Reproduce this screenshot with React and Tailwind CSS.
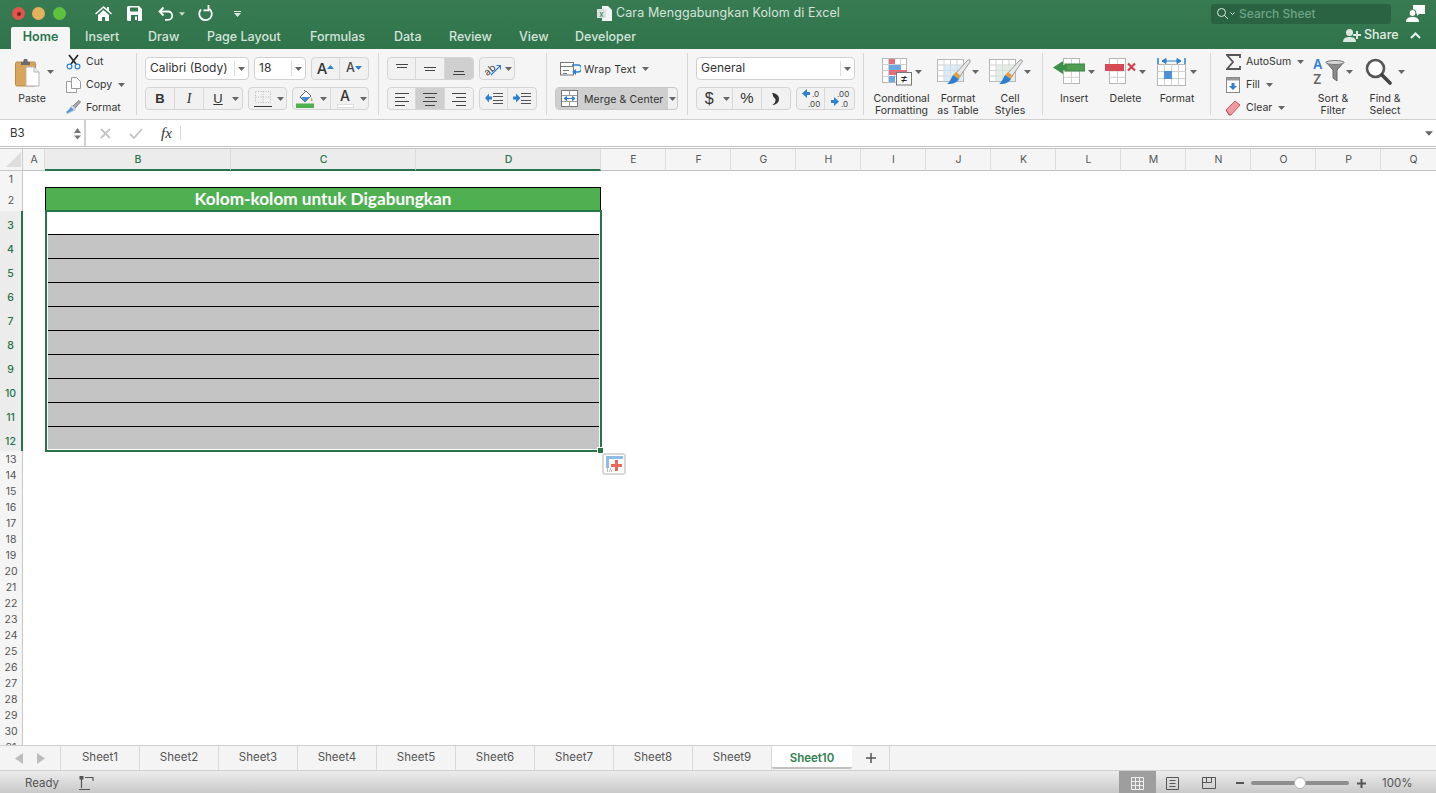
import React from "react";

const Caret = ({ c = "#666", w = 7, h = 4, className = "" }) => (
  <svg width={w} height={h} viewBox="0 0 7 4" className={"shrink-0 " + className}><path d="M0 0h7L3.5 4z" fill={c} /></svg>
);

const Sep = () => <div className="w-px shrink-0 h-[62px] mt-[4px] bg-[#d6d6d6]" />;

const Group = ({ w, children, className = "" }) => (
  <div className={"flex h-[23px] shrink-0 overflow-hidden rounded-[4px] border border-[#d4d4d4] bg-[#f1f1f1] " + className} style={{ width: w }}>
    {children}
  </div>
);

const Cell = ({ w, on, last, children }) => (
  <div className={"flex h-full items-center justify-center " + (last ? "" : "border-r border-[#d8d8d8] ") + (on ? "bg-[#cfcfcf]" : "")} style={{ width: w }}>
    {children}
  </div>
);

const Lines = ({ ys, xs }) => (
  <svg width="16" height="16" viewBox="0 0 16 16">
    {ys.map((y, i) => <path key={i} d={`M${xs[i][0]} ${y + 0.5}H${xs[i][1]}`} stroke="#444" strokeWidth="1" />)}
  </svg>
);

const Select = ({ w, label, sep = 18 }) => (
  <div className="flex h-[23px] shrink-0 items-center rounded-[4px] border border-[#d0d0d0] bg-white pl-[4px] text-[12px] text-[#333]" style={{ width: w }}>
    <span className="flex-1 whitespace-nowrap pb-[2px]">{label}</span>
    <div className="flex h-[15px] items-center justify-center border-l border-[#dcdcdc]" style={{ width: sep - 4 }}><Caret /></div>
  </div>
);

const Big = ({ w, icon, caret = true, gap = 3, lines }) => (
  <div className="flex h-full shrink-0 flex-col items-center" style={{ width: w }}>
    <div className="flex h-[44px] shrink-0 items-center justify-center pt-px" style={{ gap }}>
      {icon}
      {caret && <Caret />}
    </div>
    {lines.map((l) => (
      <div key={l} className="whitespace-nowrap text-center text-[10.5px] leading-[12px] text-[#333]">{l}</div>
    ))}
  </div>
);

const Small = ({ icon, label, caret, tw = 20 }) => (
  <div className="flex h-[23px] items-center">
    <div className="flex items-center justify-center" style={{ width: tw }}>{icon}</div>
    <span className="ml-[5px] whitespace-nowrap text-[10.5px] text-[#333]">{label}</span>
    {caret && <Caret className="ml-[6px]" />}
  </div>
);

/* ---------- ribbon drawings ---------- */
const PasteIcon = () => (
  <svg width="25" height="29" viewBox="0 0 25 29">
    <rect x="0.5" y="4" width="20" height="24" rx="1.5" fill="#d9a45c" stroke="#b98b49" />
    <path d="M6 4h2l1-3h3l1 3h2v3H6z" fill="#6b6b6b" />
    <path d="M11 9h8l5 5v14H11z" fill="#fff" stroke="#b5b5b5" />
    <path d="M19 9v5h5" fill="#eee" stroke="#b5b5b5" />
  </svg>
);
const CutIcon = () => (
  <svg width="15" height="16" viewBox="0 0 15 16" fill="none">
    <path d="M3 1l7 9M12 1L5 10" stroke="#222" strokeWidth="1.6" />
    <circle cx="3.5" cy="12.5" r="2.4" stroke="#2f7fd0" strokeWidth="1.2" />
    <circle cx="11.5" cy="12.5" r="2.4" stroke="#2f7fd0" strokeWidth="1.2" />
  </svg>
);
const CopyIcon = () => (
  <svg width="15" height="16" viewBox="0 0 15 16" fill="#fff" stroke="#9a9a9a">
    <path d="M5.5 .5h5l4 4v7h-9z" />
    <path d="M.5 4.5h5v7h5v4h-10z" />
  </svg>
);
const BrushIcon = () => (
  <svg width="16" height="15" viewBox="0 0 16 15">
    <path d="M8 6l6-5.500 1.500 1.500L10 8z" fill="#b0b0b0" stroke="#555" strokeWidth=".7" />
    <path d="M7 5l4 4-2 2-1-1-1 2-1-1-1 2-1-1-1 2-2-2c2-1 3-3 4-4z" fill="#5b97dc" />
    <path d="M7 5l4 4-1.500 1.500-4-4z" fill="#d9dde3" />
  </svg>
);
const Borders = () => (
  <svg width="18" height="18" viewBox="0 0 18 18">
    <path d="M1.500 1.500h15v11h-15zM9 1.500v11M1.500 7h15" fill="none" stroke="#bbb" strokeDasharray="1 1.500" />
    <path d="M0 16.500h18" stroke="#333" />
  </svg>
);
const Bucket = () => (
  <svg width="18" height="19" viewBox="0 0 18 19">
    <path d="M4 8l6-6 5 5-6 6z" fill="#fff" stroke="#666" />
    <path d="M8 1l2 2" stroke="#666" />
    <path d="M5 8h9l-5 5z" fill="#3f8fdc" />
    <path d="M15 8c1 1.500 2 2.500 1.500 4h-1.500z" fill="#e2a043" />
    <rect x="0" y="14.500" width="18" height="4.500" fill="#4fae4e" />
  </svg>
);
const FontColor = () => (
  <div className="flex flex-col items-center">
    <span className="text-[14px] font-medium leading-[14px] text-[#333]">A</span>
    <span className="mt-[1px] h-[4px] w-[17px] border border-[#ddd] bg-white" />
  </div>
);
const Orient = () => (
  <svg width="18" height="16" viewBox="0 0 18 16" className="overflow-visible">
    <text x="0" y="12" fontSize="10" fill="#444" fontFamily="Inter, sans-serif" transform="rotate(-40 6 9)">ab</text>
    <path d="M7 14L16 5M12.500 4.500H16.500V8.500" fill="none" stroke="#2f7fd0" strokeWidth="1.100" />
  </svg>
);
const Indent = ({ flip }) => (
  <svg width="18" height="13" viewBox="0 0 18 13">
    <path d="M8 1.500h10M8 4.500h10M8 8.500h10M8 11.500h10" stroke="#555" />
    {flip ? <path d="M0 4.500h3V1.500L7.500 6 3 10.500v-3H0z" fill="#2f7fd0" /> : <path d="M7 4.500H4V1.500L0 6l4 4.500v-3h3z" fill="#2f7fd0" />}
  </svg>
);
const WrapIcon = () => (
  <svg width="21" height="14" viewBox="0 0 21 14">
    <rect x=".5" y=".5" width="13" height="12.500" fill="#fff" stroke="#777" />
    <path d="M.5 4.500h13M3 8.500h6M3 11.500h4" stroke="#777" />
    <path d="M12 3h6a2.500 2.500 0 010 7h-3" fill="none" stroke="#2f7fd0" strokeWidth="1.600" />
    <path d="M16 7l-4 3 4 3z" fill="#2f7fd0" />
  </svg>
);
const MergeIcon = () => (
  <svg width="20" height="17" viewBox="0 0 20 17">
    <rect x=".5" y=".5" width="16" height="16" fill="#fff" stroke="#777" />
    <path d="M.5 5.500h16M.5 11.500h16M8.500 .5v5M8.500 11.500v5" stroke="#999" />
    <path d="M3 8.500h11M3 8.500l2.500-2v4zM14 8.500l-2.500-2v4z" fill="#2f7fd0" stroke="#2f7fd0" />
  </svg>
);
const Dec = ({ up }) => (
  <svg width="22" height="20" viewBox="0 0 22 20" fontFamily="Inter, sans-serif" fontSize="8" fill="#444">
    {up ? (
      <>
        <text x="8" y="8">.00</text><text x="12" y="18">.0</text>
        <path d="M1 11h3V8l5 4.500-5 4.500v-3H1z" fill="#2f7fd0" transform="translate(1 0)" />
      </>
    ) : (
      <>
        <text x="12" y="8">.0</text><text x="8" y="18">.00</text>
        <path d="M10 3H7V0L2 4.500 7 9V6h3z" fill="#2f7fd0" />
      </>
    )}
  </svg>
);
const Comma = () => (
  <svg width="7" height="12" viewBox="0 0 7 12"><path d="M0 0c4 0 7 2.500 7 6s-3 6-6.500 6c2-1.500 3-3 3-5C3.500 5 2 5 1.500 4 1 3 1 1.500 0 0z" fill="#333" /></svg>
);
const GridBase = ({ x = 0, y = 0, w = 26, h = 22, cols = 4, rows = 4, s = "#b5b5b5" }) => (
  <g transform={`translate(${x} ${y})`}>
    <rect x=".5" y=".5" width={w} height={h} fill="#fff" stroke={s} />
    {Array.from({ length: cols - 1 }, (_, i) => <path key={i} d={`M${((i + 1) * w) / cols + 0.5} .5v${h}`} stroke="#d0d0d0" />)}
    {Array.from({ length: rows - 1 }, (_, i) => <path key={i} d={`M.5 ${((i + 1) * h) / rows + 0.5}h${w}`} stroke="#d0d0d0" />)}
  </g>
);
const CondIcon = () => (
  <svg width="30" height="28" viewBox="0 0 30 28">
    <GridBase w={24} h={24} />
    <rect x="7" y="1" width="6" height="5" fill="#e0707a" />
    <rect x="7" y="7" width="12" height="5" fill="#6ea8e0" />
    <rect x="7" y="12" width="18" height="5" fill="#e0707a" />
    <rect x="7" y="18" width="6" height="6" fill="#6ea8e0" />
    <rect x="14.500" y="14.500" width="15" height="12.500" fill="#fff" stroke="#777" />
    <text x="22" y="25" fontSize="12" textAnchor="middle" fill="#222" fontFamily="Inter, sans-serif">≠</text>
  </svg>
);
const BrushBig = ({ x = 8 }) => (
  <g transform={`translate(${x} 0)`}>
    <path d="M9 15L21 2c1-1 3 0 2 2L13 18z" fill="#e8e8e8" stroke="#9a9a9a" />
    <path d="M9 14l5 4-2 3-6-4z" fill="#e2a043" />
    <path d="M6 17l6 4c-3 5-8 5-12 5 3-2 4-6 6-9z" fill="#2f7fd0" />
  </g>
);
const TableIcon = ({ tint = "#cfe3f3" }) => (
  <svg width="34" height="28" viewBox="0 0 34 28">
    <GridBase w={26} h={22} x={0} y={1} />
    <rect x="7" y="7" width="19" height="16" fill={tint} opacity=".7" />
    <BrushBig x={10} />
  </svg>
);
const InsertIcon = () => (
  <svg width="32" height="27" viewBox="0 0 32 27">
    <GridBase x={10} y={0} w={16} h={25} cols={2} rows={4} />
    <rect x="12" y="6" width="20" height="7" fill="#4f9e54" stroke="#3c8344" />
    <path d="M10 3v13L0 9.500z" fill="#3c8f46" />
    <path d="M10 7h4v5h-4z" fill="#3c8f46" />
  </svg>
);
const DeleteIcon = () => (
  <svg width="31" height="27" viewBox="0 0 31 27">
    <GridBase x={4} y={0} w={16} h={25} cols={2} rows={4} />
    <rect x="0" y="6" width="19" height="7" fill="#d64a53" />
    <path d="M23 5.500l7 7M30 5.500l-7 7" stroke="#d13f49" strokeWidth="2.200" />
  </svg>
);
const FormatIcon = () => (
  <svg width="30" height="28" viewBox="0 0 30 28">
    <path d="M1 0v6M28 0v6" stroke="#2f7fd0" strokeWidth="1.500" />
    <path d="M5 3h19M5 3l4-2.500v5zM24 3l-4-2.500v5z" stroke="#2f7fd0" fill="#2f7fd0" />
    <GridBase y={6} w={28} h={21} cols={4} rows={3} />
    <rect x="7" y="13" width="8" height="8" fill="#4f8fd8" />
  </svg>
);
const Sigma = () => (
  <svg width="15" height="16" viewBox="0 0 15 16"><path d="M14 4V1H1l6 7-6 7h13v-3" fill="none" stroke="#555" strokeWidth="1.800" /></svg>
);
const FillIcon = () => (
  <svg width="14" height="16" viewBox="0 0 14 16">
    <rect x=".5" y=".5" width="13" height="15" fill="#fff" stroke="#888" />
    <rect x="1" y="1" width="12" height="2.500" fill="#999" />
    <path d="M5.500 6h3v3h2.500L7 13 3 9h2.500z" fill="#2f7fd0" />
  </svg>
);
const Eraser = () => (
  <svg width="16" height="16" viewBox="0 0 16 16">
    <path d="M1 10l9-9 5 4-9 10H4z" fill="#ee9ca2" stroke="#c95560" />
    <path d="M1 10l4 5" stroke="#c95560" />
  </svg>
);
const SortIcon = () => (
  <svg width="31" height="27" viewBox="0 0 31 27" className="overflow-visible" fontFamily="Inter, sans-serif" fontWeight="600">
    <text x="0" y="11" fontSize="13" fill="#2f7fd0">A</text>
    <text x="0" y="26" fontSize="13" fill="#666">Z</text>
    <path d="M13 4h18l-7 8v11l-4-3v-8z" fill="#8a8a8a" stroke="#666" />
    <ellipse cx="22" cy="4.500" rx="9" ry="2" fill="#d8d8d8" stroke="#777" />
  </svg>
);
const Magnifier = () => (
  <svg width="27" height="27" viewBox="0 0 27 27" fill="none">
    <circle cx="10.500" cy="10.500" r="8.500" fill="#fff" stroke="#555" strokeWidth="2.600" />
    <path d="M17 17l8 8" stroke="#444" strokeWidth="3.600" strokeLinecap="round" />
  </svg>
);

/* ---------- title bar drawings ---------- */
const HomeI = () => (
  <svg width="17" height="15" viewBox="0 0 17 15" fill="#fff">
    <path d="M8.500 0L0 7.500 1 8.600 8.500 2 16 8.600l1-1.100-3-2.700V1h-2v2z" />
    <path d="M3 9l5.500-5L14 9v6h-4v-4H7v4H3z" />
  </svg>
);
const SaveI = () => (
  <svg width="15" height="15" viewBox="0 0 15 15">
    <path d="M0 1.500A1.500 1.500 0 011.500 0H12l3 3v10.500a1.500 1.500 0 01-1.500 1.500h-12A1.500 1.500 0 010 13.500z" fill="#fff" />
    <rect x="3" y="1.500" width="8" height="4" fill="#33784f" />
    <rect x="4" y="9" width="7" height="6" fill="#33784f" />
    <rect x="8" y="10.500" width="2" height="3.500" fill="#fff" />
  </svg>
);
const UndoI = () => (
  <svg width="16" height="15" viewBox="0 0 16 15" fill="none" stroke="#fff" strokeWidth="1.800">
    <path d="M5.500 1.500L1.500 5.500l4 4M1.500 5.500H10a4.200 4.200 0 010 8.400H7" />
  </svg>
);
const RedoI = () => (
  <svg width="16" height="17" viewBox="0 0 16 17" fill="none" stroke="#fff" strokeWidth="1.800">
    <path d="M4 4.500a6.300 6.300 0 108.500-.5" />
    <path d="M11.500 0v5.500H6.500" transform="translate(0 -.2)" />
  </svg>
);
const FileI = () => (
  <svg width="15" height="15" viewBox="0 0 15 15">
    <path d="M5 0h6l4 4v11H5z" fill="#f4f4f4" />
    <rect x="0" y="3" width="9" height="9" fill="#d7e4dc" />
    <text x="4.500" y="10.500" textAnchor="middle" fontSize="8" fill="#2f7a4f" fontFamily="Inter, sans-serif">x</text>
  </svg>
);
const UserI = () => (
  <svg width="19" height="19" viewBox="0 0 19 19" fill="#fff">
    <path d="M7 1h12v9h-6l-2 2v-2H7z" />
    <circle cx="6.500" cy="9" r="3.500" stroke="#33784f" />
    <path d="M0 18c0-4 3-5 6.500-5s6.500 1 6.500 5z" />
  </svg>
);
const ShareI = () => (
  <svg width="18" height="13" viewBox="0 0 18 13" fill="#dbe8e0">
    <circle cx="6.500" cy="3.500" r="3.500" />
    <path d="M0 13c0-4 3-5 6.500-5s6.500 1 6.500 5z" />
    <path d="M13 2h2v3h3v2h-3v3h-2V7h-3V5h3z" />
  </svg>
);

const tabs = [
  ["Insert", 36], ["Draw", 32], ["Page Layout", 76], ["Formulas", 57], ["Data", 28], ["Review", 43], ["View", 29], ["Developer", 63],
];

const cols = [
  ["A", 22, 0], ["B", 186, 1], ["C", 185, 1], ["D", 185, 1],
  ...["E", "F", "G", "H", "I", "J", "K", "L", "M", "N", "O", "P", "Q"].map((c) => [c, 65, 0]),
];

const rowH = (n) => (n >= 2 && n <= 12 ? 24 : 16);
const rows = Array.from({ length: 31 }, (_, i) => i + 1);
const sheets = ["Sheet1", "Sheet2", "Sheet3", "Sheet4", "Sheet5", "Sheet6", "Sheet7", "Sheet8", "Sheet9"];

export default function App() {
  return (
    <div className="flex h-[793px] w-[1436px] flex-col overflow-hidden bg-white font-['Inter','Liberation_Sans',sans-serif]">
      {/* title bar */}
      <div className="h-[49px] shrink-0 bg-gradient-to-b from-[#387b53] to-[#30744c]">
        <div className="flex h-[27px] items-center">
          <div className="flex w-[597px] shrink-0 items-center">
            <div className="ml-[12px] flex h-[13px] w-[13px] items-center justify-center rounded-full bg-[#e0564e]"><span className="h-[4px] w-[4px] rounded-full bg-[#7c2019]" /></div>
            <div className="ml-[7px] h-[13px] w-[13px] rounded-full bg-[#e6b15f]" />
            <div className="ml-[8px] h-[13px] w-[13px] rounded-full bg-[#5ec23f]" />
            <div className="ml-[29px]"><HomeI /></div>
            <div className="ml-[15px]"><SaveI /></div>
            <div className="ml-[16px]"><UndoI /></div>
            <Caret c="#c9dbd0" className="ml-[5px]" w={6} />
            <div className="ml-[12px]"><RedoI /></div>
            <div className="ml-[21px] flex flex-col items-center gap-[1px]">
              <span className="h-px w-[7px] bg-[#d8e6dd]" />
              <Caret c="#d8e6dd" />
            </div>
          </div>
          <FileI />
          <span className="ml-[4px] w-[595px] shrink-0 whitespace-nowrap text-[12.500px] tracking-[0.1px] text-[#d5e4da]">Cara Menggabungkan Kolom di Excel</span>
          <div className="flex h-[20px] w-[180px] shrink-0 items-center rounded-[3px] bg-[#2a6342] pl-[6px]">
            <svg width="11" height="11" viewBox="0 0 11 11" fill="none" stroke="#dfe9e3"><circle cx="4.500" cy="4.500" r="4" /><path d="M7.500 7.500L11 11" /></svg>
            <svg width="5" height="3" viewBox="0 0 5 3" className="ml-[2px]" fill="none" stroke="#dfe9e3"><path d="M.5 .5l2 2 2-2" /></svg>
            <span className="ml-[4px] text-[12px] font-medium text-[#6ea385]">Search Sheet</span>
          </div>
          <div className="ml-[15px]"><UserI /></div>
        </div>
        <div className="flex h-[22px] items-end">
          <div className="ml-[11px] flex h-[22px] w-[59px] items-center justify-center rounded-t-[2px] bg-[#f5f5f5] pb-[2px] text-[12.500px] font-semibold text-[#27734a]">Home</div>
          <div className="ml-[15px] flex h-[22px] items-center gap-[27px] pb-[2px]">
            {tabs.map(([t, w]) => (
              <span key={t} className="whitespace-nowrap text-[12.500px] font-medium text-[#d4e4da]" style={{ width: w }}>{t}</span>
            ))}
          </div>
          <div className="ml-[705px] flex h-[22px] items-center pb-[6px]">
            <ShareI />
            <span className="ml-[3px] text-[12.500px] font-medium text-[#e3eee7]">Share</span>
            <svg width="11" height="7" viewBox="0 0 11 7" className="ml-[11px]" fill="none" stroke="#e8f0eb" strokeWidth="2"><path d="M1 6l4.500-4.500L10 6" /></svg>
          </div>
        </div>
      </div>

      {/* ribbon */}
      <div className="flex h-[71px] shrink-0 border-b border-[#d0d0d0] bg-[#f5f5f5]">
        {/* clipboard */}
        <div className="flex h-full w-[136px] shrink-0">
          <div className="flex w-[64px] flex-col items-center">
            <div className="flex h-[44px] w-full items-center pl-[15px] pt-[2px]">
              <PasteIcon />
              <Caret className="ml-[7px]" />
            </div>
            <span className="text-[10.500px] leading-[12px] text-[#333]">Paste</span>
          </div>
          <div className="ml-[1px] pt-[1px]">
            <Small icon={<CutIcon />} label="Cut" tw={16} />
            <Small icon={<CopyIcon />} label="Copy" caret tw={16} />
            <Small icon={<BrushIcon />} label="Format" tw={16} />
          </div>
        </div>
        <Sep />
        {/* font */}
        <div className="flex w-[241px] shrink-0 flex-col gap-[7px] pl-[8px] pt-[8px]">
          <div className="flex gap-[5px]">
            <Select w={104} label="Calibri (Body)" />
            <Select w={52} label="18" />
            <Group w={58}>
              <Cell w={29}><span className="text-[15px] font-medium leading-none text-[#333]">A</span><svg width="7" height="4" viewBox="0 0 7 4" className="mb-[4px]"><path d="M0 4h7L3.500 0z" fill="#2f7fd0" /></svg></Cell>
              <Cell w={29} last><span className="text-[12.500px] font-medium leading-none text-[#444]">A</span><Caret c="#2f7fd0" className="mb-[2px]" /></Cell>
            </Group>
          </div>
          <div className="flex gap-[5px]">
            <Group w={98}>
              <Cell w={29}><span className="font-['Liberation_Sans'] text-[13px] font-bold text-[#333]">B</span></Cell>
              <Cell w={29}><span className="font-['Liberation_Serif'] text-[14px] italic text-[#333]">I</span></Cell>
              <div className="flex h-full w-[28px] items-center justify-center"><span className="font-['Liberation_Sans'] text-[13px] text-[#333] underline">U</span></div>
              <div className="flex w-[10px] items-center"><Caret /></div>
            </Group>
            <Group w={39}>
              <div className="flex h-full w-[28px] items-center justify-center"><Borders /></div>
              <div className="flex flex-1 items-center"><Caret /></div>
            </Group>
            <Group w={77}>
              <div className="flex h-full w-[24px] items-end justify-center pb-[1px]"><Bucket /></div>
              <div className="flex h-full w-[14px] items-center justify-center border-r border-[#d8d8d8]"><Caret /></div>
              <div className="flex h-full w-[28px] items-center justify-center"><FontColor /></div>
              <div className="flex flex-1 items-center justify-center"><Caret /></div>
            </Group>
          </div>
        </div>
        <Sep />
        {/* alignment */}
        <div className="flex w-[167px] shrink-0 flex-col gap-[7px] pl-[8px] pt-[8px]">
          <div className="flex gap-[5px]">
            <Group w={87}>
              <Cell w={29}><Lines ys={[3, 6]} xs={[[2, 14], [3, 13]]} /></Cell>
              <Cell w={29}><Lines ys={[6, 9]} xs={[[2, 14], [3, 13]]} /></Cell>
              <Cell w={29} on last><Lines ys={[10, 13]} xs={[[3, 13], [2, 14]]} /></Cell>
            </Group>
            <div className="flex h-[23px] w-[36px] shrink-0 items-center justify-center gap-[3px] rounded-[4px] border border-[#d4d4d4] bg-[#f1f1f1] pl-[2px]"><Orient /><Caret /></div>
          </div>
          <div className="flex gap-[5px]">
            <Group w={87}>
              <Cell w={29}><Lines ys={[2, 6, 10, 14]} xs={[[1, 15], [1, 11], [1, 15], [1, 11]]} /></Cell>
              <Cell w={29} on><Lines ys={[2, 6, 10, 14]} xs={[[1, 15], [3, 13], [1, 15], [3, 13]]} /></Cell>
              <Cell w={29} last><Lines ys={[2, 6, 10, 14]} xs={[[1, 15], [5, 15], [1, 15], [5, 15]]} /></Cell>
            </Group>
            <Group w={58}>
              <Cell w={29}><Indent /></Cell>
              <Cell w={29} last><Indent flip /></Cell>
            </Group>
          </div>
        </div>
        <Sep />
        {/* wrap + merge */}
        <div className="flex w-[140px] shrink-0 flex-col gap-[7px] pl-[8px] pt-[8px]">
          <div className="flex h-[23px] items-center pl-[5px]">
            <WrapIcon />
            <span className="ml-[3px] whitespace-nowrap pt-[2px] text-[10.500px] tracking-[0.2px] text-[#333]">Wrap Text</span>
            <Caret className="ml-[6px]" />
          </div>
          <div className="flex h-[23px] w-[123px] overflow-hidden rounded-[4px] border border-[#c8c8c8] bg-[#f1f1f1]">
            <div className="flex h-full w-[112px] items-center bg-[#cfcfcf] pl-[5px]">
              <MergeIcon />
              <span className="ml-[3px] whitespace-nowrap pt-[2px] text-[10.500px] tracking-[0.1px] text-[#333]">Merge &amp; Center</span>
            </div>
            <div className="flex flex-1 items-center justify-center"><Caret /></div>
          </div>
        </div>
        <Sep />
        {/* number */}
        <div className="flex w-[175px] shrink-0 flex-col gap-[7px] pl-[8px] pt-[8px]">
          <Select w={159} label="General" />
          <div className="flex gap-[5px]">
            <Group w={95}>
              <div className="flex h-full w-[25px] items-center justify-center font-['Liberation_Sans'] text-[16px] text-[#333]">$</div>
              <div className="flex w-[12px] items-center justify-center border-r border-[#d8d8d8]"><Caret /></div>
              <Cell w={29}><span className="font-['Liberation_Sans'] text-[15px] text-[#333]">%</span></Cell>
              <Cell w={29} last><Comma /></Cell>
            </Group>
            <Group w={59}>
              <Cell w={29}><Dec /></Cell>
              <Cell w={30} last><Dec up /></Cell>
            </Group>
          </div>
        </div>
        <Sep />
        {/* styles */}
        <div className="flex w-[178px] shrink-0 gap-[2px] pl-[9px]">
          <Big w={57} icon={<CondIcon />} lines={["Conditional", "Formatting"]} />
          <Big w={52} icon={<TableIcon />} gap={1} lines={["Format", "as Table"]} />
          <div className="-ml-[2px]"><Big w={52} icon={<TableIcon tint="#d9e6dc" />} gap={1} lines={["Cell", "Styles"]} /></div>
        </div>
        <Sep />
        {/* cells */}
        <div className="flex w-[167px] shrink-0 pl-[5px]">
          <Big w={52} icon={<InsertIcon />} lines={["Insert"]} />
          <Big w={51} icon={<DeleteIcon />} lines={["Delete"]} />
          <Big w={52} icon={<FormatIcon />} lines={["Format"]} />
        </div>
        <Sep />
        {/* editing */}
        <div className="flex flex-1 pl-[14px]">
          <div className="w-[82px] shrink-0 pt-[1px]">
            <Small icon={<Sigma />} label="AutoSum" caret tw={16} />
            <Small icon={<FillIcon />} label="Fill" caret tw={16} />
            <Small icon={<Eraser />} label="Clear" caret tw={16} />
          </div>
          <Big w={52} icon={<SortIcon />} gap={2} lines={["Sort &", "Filter"]} />
          <Big w={52} icon={<Magnifier />} gap={6} lines={["Find &", "Select"]} />
        </div>
      </div>

      {/* formula bar */}
      <div className="flex h-[29px] shrink-0 items-stretch border-b-[3px] border-double border-[#c4c4c4] bg-white">
        <div className="flex w-[86px] shrink-0 items-center border-r-2 border-[#d0d0d0] pl-[10px] pt-[2px] text-[11.500px] text-[#333]">
          <span className="flex-1">B3</span>
          <div className="mr-[3px] flex flex-col gap-[2px]">
            <svg width="7" height="5" viewBox="0 0 7 5"><path d="M0 5h7L3.500 0z" fill="#777" /></svg>
            <Caret c="#777" w={7} h={5} />
          </div>
        </div>
        <div className="flex items-center pl-[14px]">
          <svg width="11" height="11" viewBox="0 0 11 11"><path d="M1 1l9 9M10 1l-9 9" stroke="#c4c4c4" strokeWidth="1.800" /></svg>
          <svg width="14" height="11" viewBox="0 0 14 11" className="ml-[18px]" fill="none"><path d="M1 6l4 4 8-9" stroke="#c4c4c4" strokeWidth="1.800" /></svg>
          <span className="ml-[18px] font-['Liberation_Serif'] text-[15px] italic text-[#333]">fx</span>
          <span className="ml-[8px] h-[14px] w-px bg-[#dcdcdc]" />
        </div>
        <div className="flex flex-1 items-center justify-end pr-[3px]"><Caret c="#666" w={8} h={5} /></div>
      </div>

      {/* column header */}
      <div className="flex h-[22px] shrink-0 bg-[#f5f5f5]">
        <div className="relative w-[23px] shrink-0 border-r border-b border-[#c8c8c8]">
          <svg width="15" height="15" viewBox="0 0 15 15" className="absolute left-[6px] top-[3px]"><path d="M15 0v15H0z" fill="#dedede" /></svg>
        </div>
        {cols.map(([c, w, on]) => (
          <div key={c} className={"flex h-full shrink-0 items-center justify-center border-r border-r-[#dcdcdc] pl-px pt-px text-[10.500px] " + (on ? "border-b-2 border-b-[#27734a] bg-[#ececec] font-medium text-[#27734a]" : "border-b border-b-[#c0c0c0] text-[#555]")} style={{ width: w }}>
            {c}
          </div>
        ))}
      </div>

      {/* sheet */}
      <div className="flex min-h-0 flex-1 overflow-hidden">
        <div className="w-[23px] shrink-0 bg-[#f5f5f5]">
          {rows.map((n) => {
            const on = n >= 3 && n <= 12;
            return (
              <div key={n} className={"flex items-center justify-center text-[10.500px] " + (on ? "border-r-2 border-[#27734a] bg-[#ececec] pt-[6px] font-medium text-[#27734a]" : n === 2 ? "border-r border-[#c8c8c8] pt-[4px] text-[#555]" : "border-r border-[#c8c8c8] pt-[2px] text-[#555]")} style={{ height: rowH(n) }}>
                {n}
              </div>
            );
          })}
        </div>
        <div className="relative flex-1 bg-white pl-[22px] pt-[16px]">
          <div className="w-[556px]">
            <div className="flex h-[24px] items-center justify-center border-x border-t border-black bg-[#4fb052] pb-[2px] font-['Lato',sans-serif] text-[17.200px] font-bold text-white">
              Kolom-kolom untuk Digabungkan
            </div>
            <div className="-mt-[1px] h-[242px] w-[557px] border-2 border-[#27734a] px-px pb-px">
              <div className="h-[23px] border-b border-black bg-white" />
              {Array.from({ length: 9 }, (_, i) => (
                <div key={i} className={"bg-[#c4c4c4] " + (i < 8 ? "h-[24px] border-b border-black" : "h-[22px]")} />
              ))}
            </div>
          </div>
          <div className="absolute left-[574px] top-[276px] h-[7px] w-[7px] border border-white bg-[#27734a]" />
          <div className="absolute left-[579px] top-[282px] flex h-[22px] w-[24px] items-center justify-center rounded-[3px] border-2 border-[#d8d8d8] bg-white">
            <svg width="17" height="16" viewBox="0 0 17 16">
              <path d="M0 0h17v3H3v9H0z" fill="#8dbce8" />
              <path d="M1 13h1M4 13h1M1 15h1M3 15h1M5 15h1" stroke="#777" />
              <path d="M9 4h3v4h4v3h-4v4H9v-4H5V8h4z" fill="#e8685a" />
            </svg>
          </div>
        </div>
      </div>

      {/* sheet tabs */}
      <div className="flex h-[26px] shrink-0 border-y border-[#d0d0d0] bg-[#f4f4f4]">
        <div className="flex w-[61px] shrink-0 items-center border-r border-[#d8d8d8] pl-[15px]">
          <svg width="8" height="11" viewBox="0 0 8 11"><path d="M8 0v11L0 5.500z" fill="#bdbdbd" /></svg>
          <svg width="8" height="11" viewBox="0 0 8 11" className="ml-[14px]"><path d="M0 0v11l8-5.500z" fill="#bdbdbd" /></svg>
        </div>
        {sheets.map((s) => (
          <div key={s} className="flex w-[79px] shrink-0 items-center justify-center border-r border-[#d8d8d8] text-[11.500px] text-[#555]">{s}</div>
        ))}
        <div className="flex h-[23px] w-[80px] shrink-0 items-center justify-center rounded-b-[2px] border-b-2 border-[#c0c0c0] bg-white pt-[4px] text-[11.500px] font-semibold text-[#2f7f50]">Sheet10</div>
        <div className="flex w-[38px] shrink-0 items-center justify-center border-r border-[#d8d8d8]">
          <svg width="10" height="10" viewBox="0 0 10 10"><path d="M5 0v10M0 5h10" stroke="#555" strokeWidth="1.500" /></svg>
        </div>
      </div>

      {/* status bar */}
      <div className="flex h-[22px] shrink-0 items-center bg-gradient-to-b from-[#ececec] to-[#c9c9c9]">
        <span className="ml-[25px] pt-[3px] text-[11.500px] text-[#555]">Ready</span>
        <svg width="16" height="15" viewBox="0 0 16 15" className="ml-[20px] mt-[2px]" fill="none" stroke="#555">
          <rect x="1" y="0" width="3" height="3" fill="#555" />
          <path d="M2.500 3v9M6 1.500h8V5M0 13.500h11" strokeWidth="1.200" />
        </svg>
        <div className="ml-[1024px] flex h-full w-[37px] items-center justify-center bg-[#9e9e9e] pt-[2px]">
          <svg width="13" height="13" viewBox="0 0 13 13" fill="none" stroke="#eee"><path d="M.5 .5h12v12H.5zM4.500 .5v12M8.500 .5v12M.5 4.500h12M.5 8.500h12" /></svg>
        </div>
        <svg width="13" height="13" viewBox="0 0 13 13" className="ml-[10px] mt-[2px]" fill="none" stroke="#555"><path d="M.5 .5h12v12H.5zM3.500 3.500h6M3.500 6.500h6M3.500 9.500h6" /></svg>
        <svg width="14" height="12" viewBox="0 0 14 12" className="ml-[23px] mt-[2px]" fill="none" stroke="#555"><path d="M.5 .5h13v11H.5zM4.500 .5v5h5v-5M.5 5.500h4" /></svg>
        <span className="ml-[20px] mt-[2px] h-[2px] w-[8px] bg-[#555]" />
        <div className="relative ml-[7px] mt-[2px] h-[4px] w-[98px] rounded-full bg-[#8e8e8e]">
          <div className="absolute left-[43px] top-[-4px] h-[12px] w-[12px] rounded-full border border-[#b5b5b5] bg-white" />
        </div>
        <svg width="9" height="9" viewBox="0 0 9 9" className="ml-[8px] mt-[2px]"><path d="M4.500 0v9M0 4.500h9" stroke="#555" strokeWidth="2" /></svg>
        <span className="ml-[16px] pt-[3px] text-[11.500px] text-[#555]">100%</span>
      </div>
    </div>
  );
}
